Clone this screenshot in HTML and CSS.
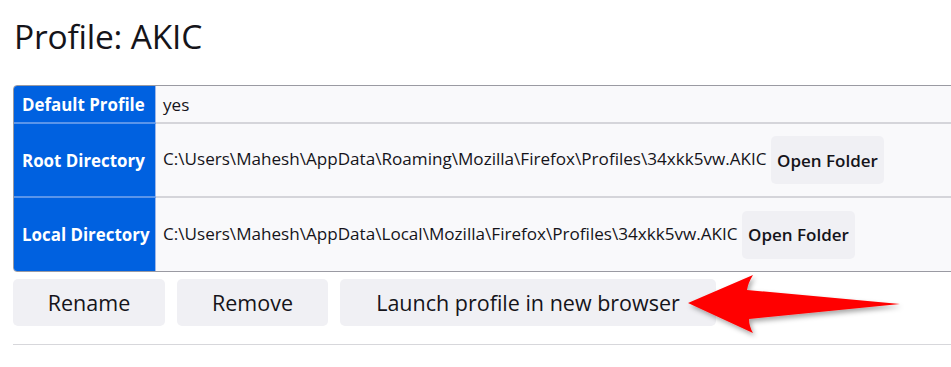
FILE: index.html
```html
<!DOCTYPE html>
<html lang="en">
<head>
<meta charset="utf-8">
<title>Profile: AKIC</title>
<link rel="stylesheet" href="styles.css">
</head>
<body>
<main class="page">
  <h2 class="title">Profile: AKIC</h2>
  <table class="profile">
    <tr class="row-short">
      <th>Default Profile</th>
      <td>yes</td>
    </tr>
    <tr>
      <th>Root Directory</th>
      <td>C:\Users\Mahesh\AppData\Roaming\Mozilla\Firefox\Profiles\34xkk5vw.AKIC <button class="btn btn-folder">Open Folder</button></td>
    </tr>
    <tr>
      <th>Local Directory</th>
      <td>C:\Users\Mahesh\AppData\Local\Mozilla\Firefox\Profiles\34xkk5vw.AKIC <button class="btn btn-folder">Open Folder</button></td>
    </tr>
  </table>
  <div class="actions">
    <button class="btn btn-action btn-rename">Rename</button>
    <button class="btn btn-action btn-remove">Remove</button>
    <button class="btn btn-action btn-launch">Launch profile in new browser</button>
  </div>
  <hr class="divider">
</main>
<svg class="arrow" width="240" height="80" viewBox="0 0 240 80" aria-hidden="true">
  <defs>
    <filter id="sh" x="-10%" y="-20%" width="130%" height="150%">
      <feDropShadow dx="2" dy="3" stdDeviation="2.5" flood-color="#000" flood-opacity="0.35"/>
    </filter>
  </defs>
  <path d="M8 38 L73 10 Q68 18 67 25 L220 39 L69 54 Q69 61 73 68 Z" fill="#ff0000" filter="url(#sh)"/>
</svg>
</body>
</html>
```

FILE: styles.css
```css
html, body {
  margin: 0;
  padding: 0;
  background: #ffffff;
  overflow: hidden;
}

body {
  font-family: "Open Sans", "Noto Sans", sans-serif;
  color: #15141a;
  position: relative;
  width: 951px;
  height: 367px;
}

.page {
  padding: 0 0 0 13px;
}

.title {
  margin: 0;
  padding-top: 13px;
  padding-left: 1px;
  font-size: 33.5px;
  font-weight: 400;
  line-height: 46px;
  height: 72px;
  letter-spacing: -0.2px;
}

.profile {
  width: 960px;
  border-collapse: separate;
  border-spacing: 0;
  border: 1px solid #9a9aa2;
  border-radius: 4px;
  overflow: hidden;
  background: #f9f9fb;
  font-size: 17.1px;
}

.profile th {
  background: #0061e0;
  color: #ffffff;
  font-weight: 700;
  text-align: start;
  padding: 0 4px 0 8px;
  width: 142px;
  white-space: nowrap;
  border-right: 1px solid #9fb8e8;
  border-bottom: 2px solid #5a95ea;
  height: 74px;
  box-sizing: border-box;
  font-size: 16.9px;
}

.profile td {
  padding: 0 7px;
  border-bottom: 2px solid #d5d5da;
  height: 74px;
  box-sizing: border-box;
  white-space: nowrap;
}

.profile tr:last-child th,
.profile tr:last-child td {
  border-bottom: none;
  height: 73px;
}

.profile .row-short th,
.profile .row-short td {
  height: 38px;
}

.btn {
  font-family: inherit;
  color: #15141a;
  background: #f0f0f4;
  border: none;
  border-radius: 5px;
  cursor: pointer;
}

.btn-folder {
  height: 48px;
  padding: 0 6px;
  font-size: 17px;
  font-weight: 600;
  margin-left: 0;
  vertical-align: middle;
}

.actions {
  display: flex;
  gap: 12px;
  margin-top: 7px;
}

.btn-action {
  height: 47px;
  font-size: 21.5px;
  font-weight: 400;
  padding: 0;
}

.btn-rename { width: 152px; }
.btn-remove { width: 151px; }
.btn-launch { width: 376px; }

.divider {
  margin: 18px 0 0 0;
  border: none;
  border-top: 1px solid #d7d7db;
}

.arrow {
  position: absolute;
  left: 680px;
  top: 265px;
}
```
